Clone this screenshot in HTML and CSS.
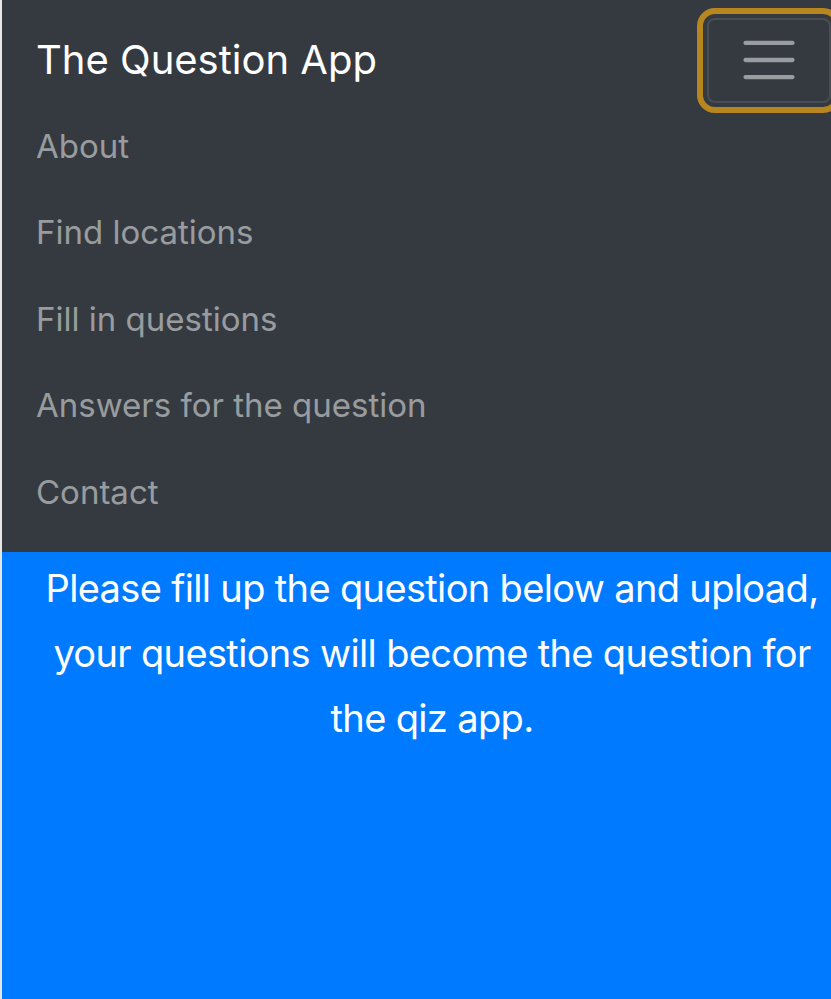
FILE: index.html
```html
<!DOCTYPE html>
<html lang="en">
<head>
<meta charset="utf-8">
<title>The Question App</title>
<link rel="stylesheet" href="styles.css">
</head>
<body>
<div class="page">
  <nav class="navbar">
    <div class="navbar-top">
      <a class="brand" href="#">The Question App</a>
      <button class="toggler" type="button" aria-label="Toggle navigation">
        <svg class="toggler-icon" viewBox="0 0 30 30" width="64" height="64" aria-hidden="true">
          <path d="M4 7h22M4 15h22M4 23h22" stroke="rgba(255,255,255,0.5)" stroke-width="2" stroke-linecap="round" fill="none"/>
        </svg>
      </button>
    </div>
    <ul class="nav-list">
      <li><a class="nav-link" href="#">About</a></li>
      <li><a class="nav-link" href="#">Find locations</a></li>
      <li><a class="nav-link" href="#">Fill in questions</a></li>
      <li><a class="nav-link" href="#">Answers for the question</a></li>
      <li><a class="nav-link" href="#">Contact</a></li>
    </ul>
  </nav>
  <section class="hero">
    <p class="hero-text">Please fill up the question below and upload, your questions will become the question for the qiz app.</p>
  </section>
</div>
</body>
</html>
```

FILE: styles.css
```css
html, body {
  margin: 0;
  padding: 0;
  overflow: hidden;
  background: #e6e6e6;
}

body {
  font-family: "Inter", "Noto Sans", "Liberation Sans", sans-serif;
  height: 999px;
}

.page {
  width: 860px;
  min-height: 999px;
  margin-left: 2px;
  display: flex;
  flex-direction: column;
  background: #007bff;
}

.navbar {
  background: #343a40;
  padding: 17px 31px 17px 34px;
}

.navbar-top {
  height: 86px;
  display: flex;
  align-items: center;
  justify-content: space-between;
}

.brand {
  color: #ffffff;
  text-decoration: none;
  font-size: 40px;
  line-height: 86px;
  white-space: nowrap;
}

.toggler {
  width: 124px;
  height: 85px;
  box-sizing: border-box;
  padding: 0;
  background: transparent;
  border: 2px solid rgba(255, 255, 255, 0.1);
  border-radius: 8px;
  outline: 6px solid #b8861e;
  outline-offset: 4px;
  display: flex;
  align-items: center;
  justify-content: center;
}

.toggler-icon {
  display: block;
}

.nav-list {
  list-style: none;
  margin: 0;
  padding: 0;
}

.nav-link {
  display: block;
  height: 86.4px;
  line-height: 86.4px;
  font-size: 33px;
  color: rgba(255, 255, 255, 0.5);
  text-decoration: none;
  white-space: nowrap;
}

.hero {
  flex: 1;
  padding-top: 4px;
  display: flex;
  justify-content: center;
}

.hero-text {
  margin: 0;
  width: 800px;
  text-align: center;
  color: #ffffff;
  font-size: 38px;
  letter-spacing: -0.65px;
  line-height: 65px;
}
```
